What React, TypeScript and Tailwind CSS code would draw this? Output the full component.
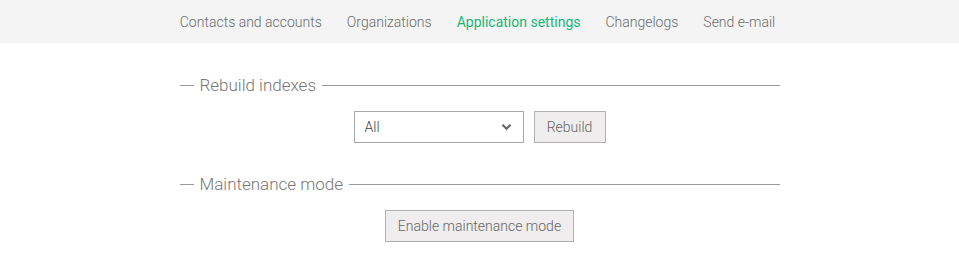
const navItems = [
  { label: "Contacts and accounts", active: false },
  { label: "Organizations", active: false },
  { label: "Application settings", active: true },
  { label: "Changelogs", active: false },
  { label: "Send e-mail", active: false },
];

function Legend({ title }: { title: string }) {
  return (
    <div className="flex items-center">
      <span className="h-px w-[14px] bg-[#9a9a9a]" />
      <span className="px-[6px] text-[17px] font-light leading-5 text-[#777]">{title}</span>
      <span className="h-px flex-1 bg-[#9a9a9a]" />
    </div>
  );
}

export default function App() {
  return (
    <div className="min-h-[270px] bg-white font-['Roboto',sans-serif]">
      <nav className="flex h-[43px] items-center justify-center gap-[25px] bg-[#f4f4f4] pt-[2px] pr-[4px] text-[14px] font-light">
        {navItems.map((n) => (
          <a
            key={n.label}
            className={n.active ? "font-normal text-[#14b97a]" : "text-[#6b6b6b]"}
          >
            {n.label}
          </a>
        ))}
      </nav>

      <div className="mx-auto w-[600px] pt-[32px]">
        <Legend title="Rebuild indexes" />
        <div className="mt-[16px] flex justify-center gap-[10px]">
          <div className="flex h-[32px] w-[170px] items-center justify-between border border-[#a8a8a8] bg-white pl-[10px] pr-[11px] text-[14px] font-light text-[#444]">
            <span>All</span>
            <svg width="11" height="8" viewBox="0 0 11 8" fill="none">
              <path d="M1.5 1.8 5.5 5.8 9.5 1.8" stroke="#666" strokeWidth="2.2" />
            </svg>
          </div>
          <button className="h-[32px] w-[72px] border border-[#b0b0b0] bg-[#efeded] text-[14px] font-light text-[#666]">
            Rebuild
          </button>
        </div>

        <div className="mt-[31px]">
          <Legend title="Maintenance mode" />
        </div>
        <div className="mt-[16px] flex justify-center">
          <button className="h-[32px] w-[189px] border border-[#b0b0b0] bg-[#efeded] text-[14px] font-light text-[#666]">
            Enable maintenance mode
          </button>
        </div>
      </div>
    </div>
  );
}
